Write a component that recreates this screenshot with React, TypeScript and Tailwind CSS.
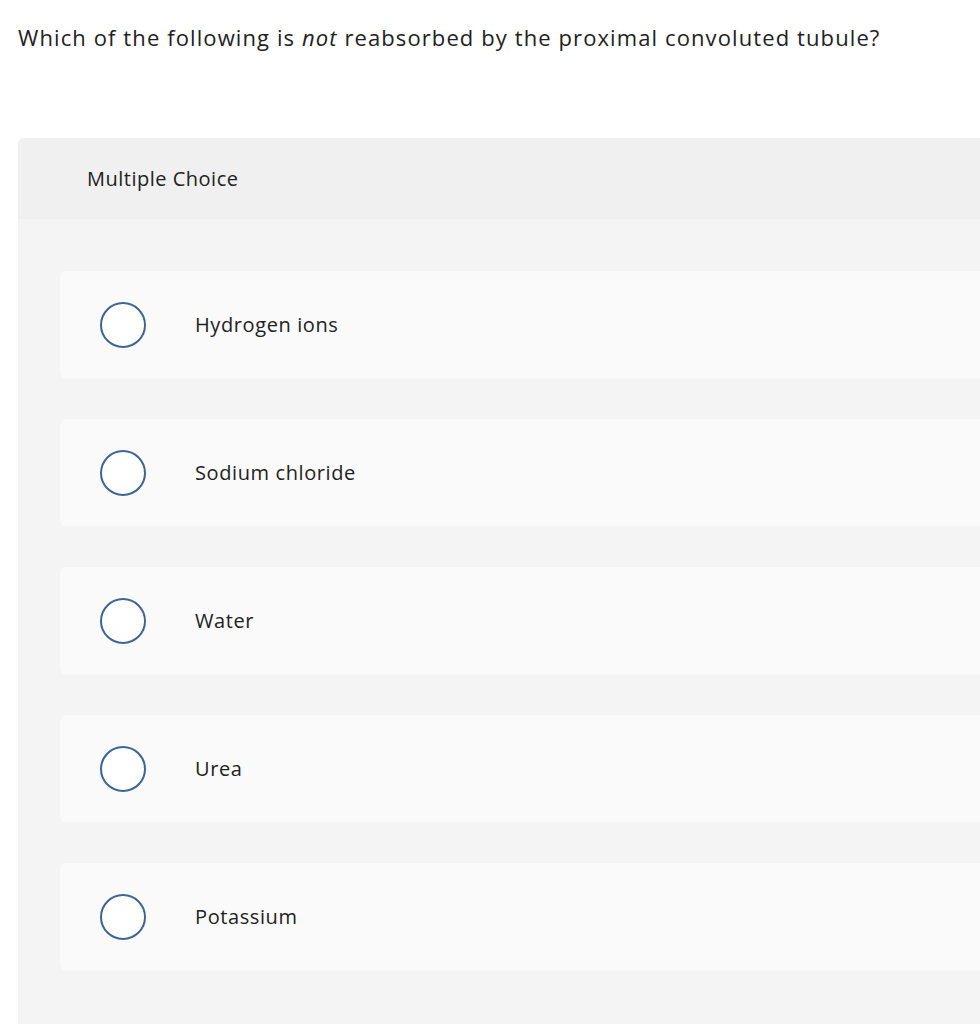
import React from "react";

const options = ["Hydrogen ions", "Sodium chloride", "Water", "Urea", "Potassium"];

export default function App() {
  return (
    <div className="min-h-[1024px] bg-white text-[#222222]" style={{ fontFamily: "'Open Sans', 'Noto Sans', sans-serif" }}>
      <div className="pl-[18px] pt-[21px] text-[22px] leading-[32px] tracking-[1.1px]">
        Which of the following is <em>not</em> reabsorbed by the proximal convoluted tubule?
      </div>
      <div className="ml-[18px] mt-[85px] rounded-tl-[6px] bg-[#f4f4f4] min-h-[886px]">
        <div className="h-[81px] flex items-center pl-[69px] bg-[#f0f0f0] rounded-tl-[6px] text-[20px] tracking-[0.5px]">
          Multiple Choice
        </div>
        <div className="pt-[52px] pl-[42px] flex flex-col gap-[41px]">
          {options.map((o) => (
            <div key={o} className="h-[107px] bg-[#fafafa] rounded-l-[6px] flex items-center">
              <div className="ml-[40px] w-[46px] h-[46px] rounded-full border-2 border-[#3d6597] bg-white shrink-0" />
              <div className="ml-[49px] text-[20px] tracking-[0.6px]">{o}</div>
            </div>
          ))}
        </div>
      </div>
    </div>
  );
}
